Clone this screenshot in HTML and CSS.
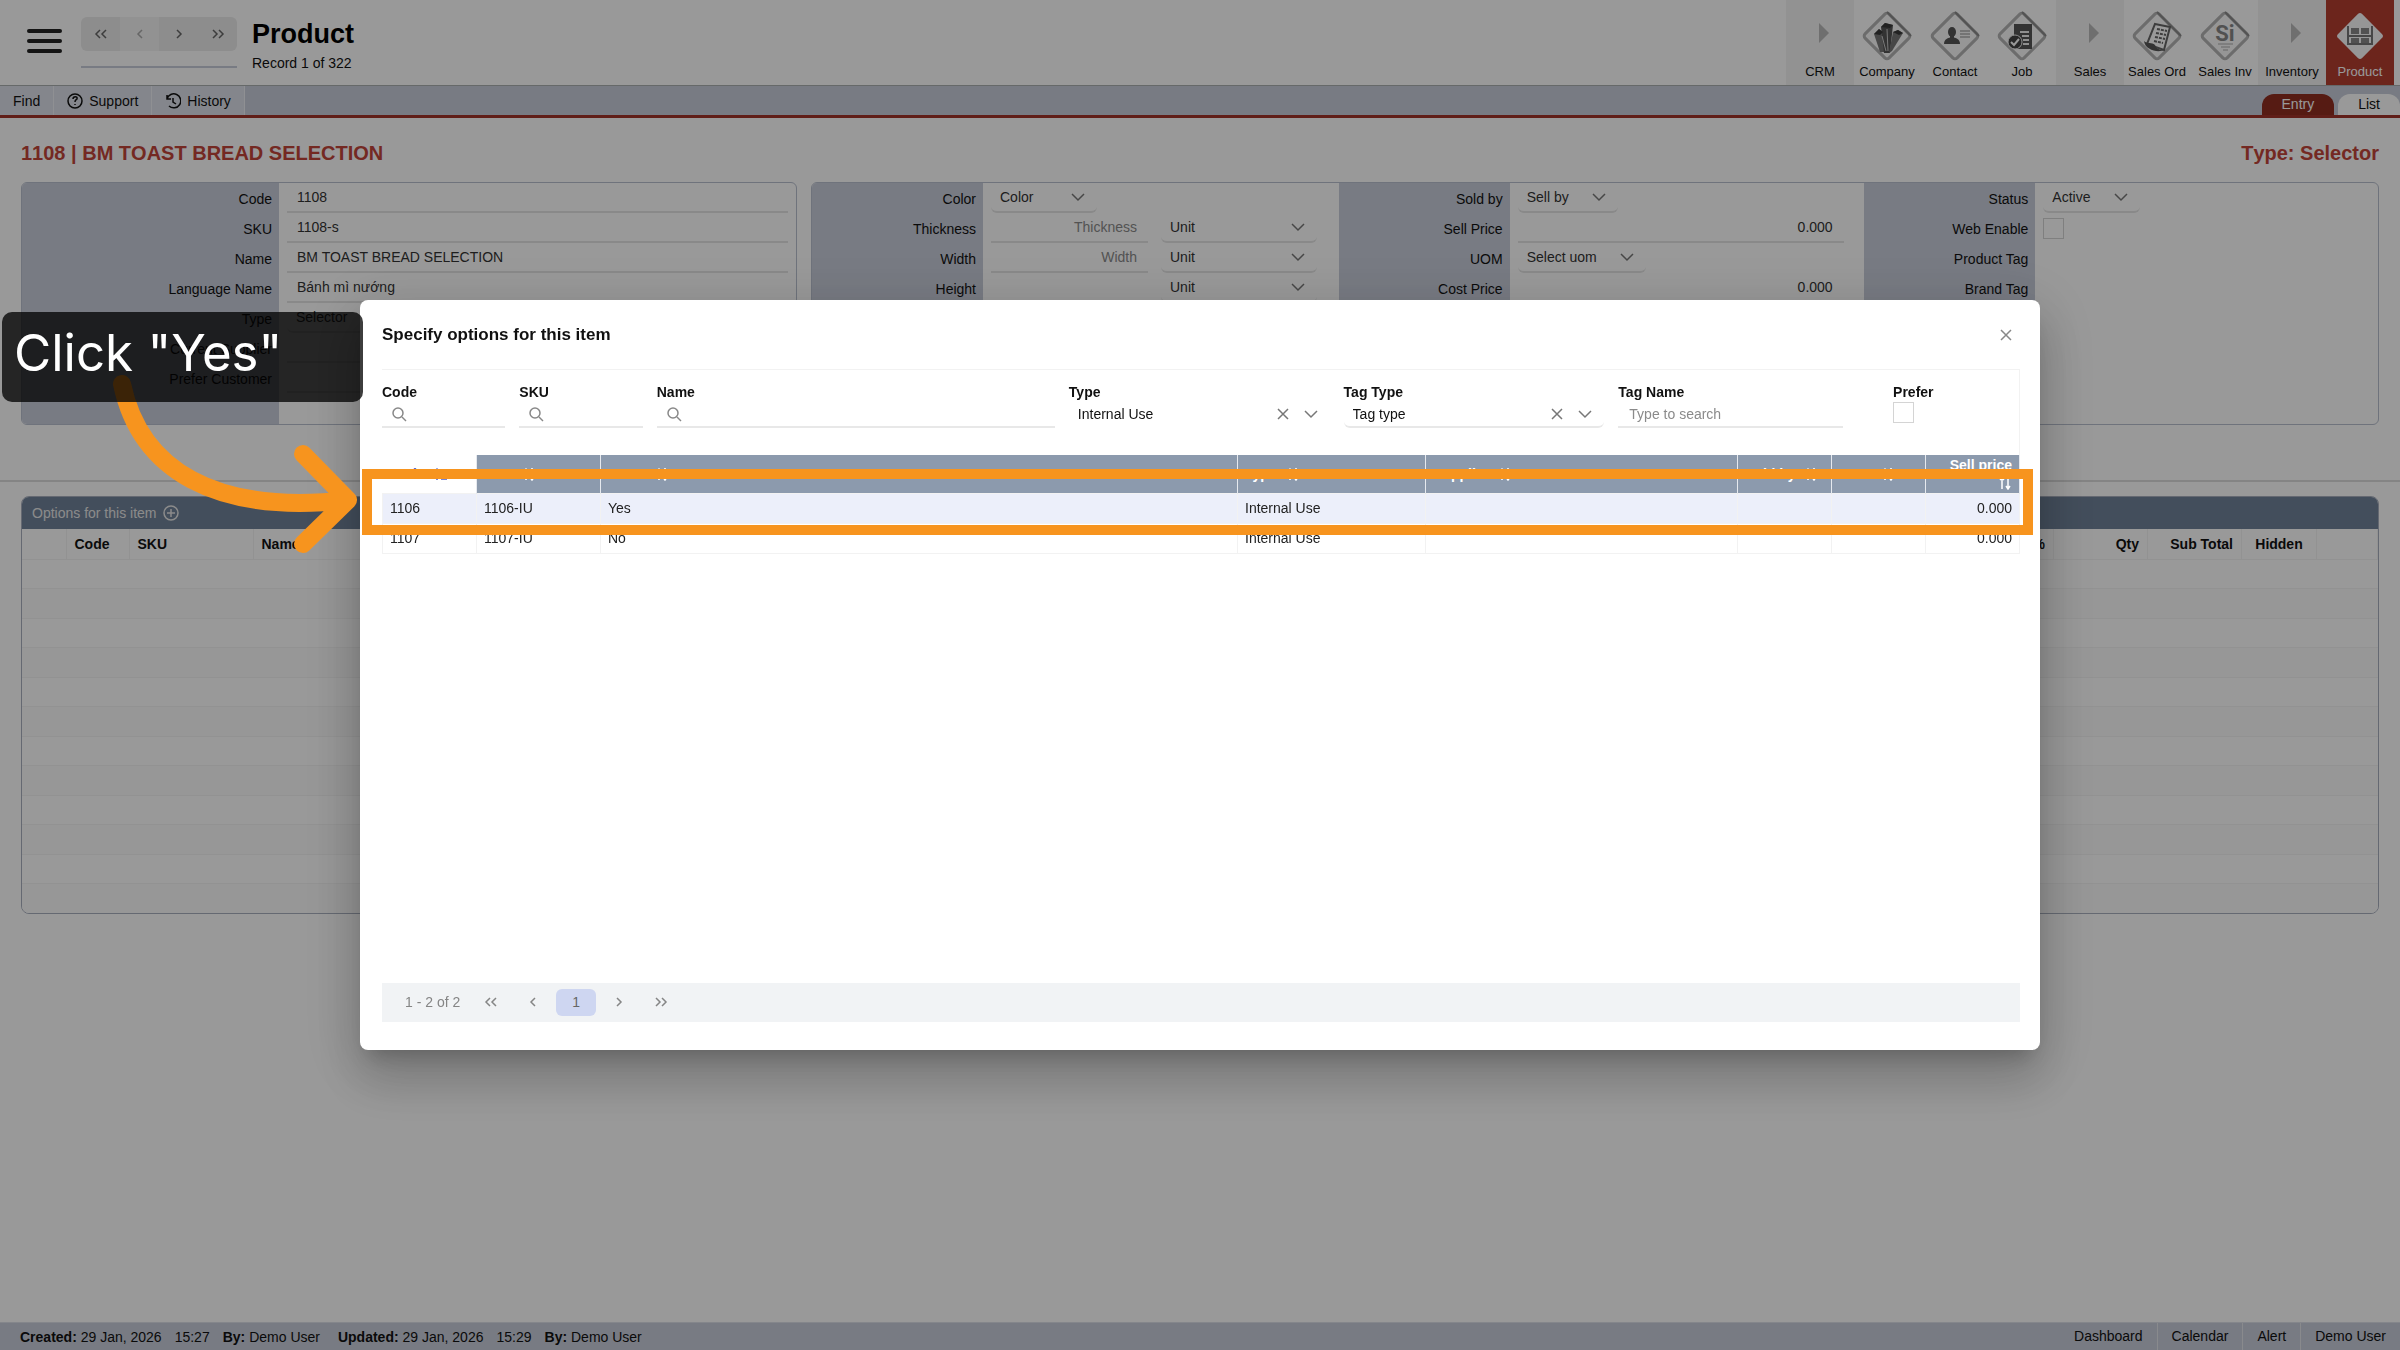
FILE: index.html
```html
<!DOCTYPE html>
<html lang="en">
<head>
  <meta charset="UTF-8">
  <title>Product</title>
  <link rel="stylesheet" href="styles.css">
</head>
<body>
  <!-- shared icons -->
  <svg class="sprite" aria-hidden="true">
    <symbol id="chevron" viewBox="0 0 14 14"><path d="M1 4l6 6 6-6"/></symbol>
    <symbol id="left" viewBox="0 0 14 14"><path d="M9 3L5 7l4 4"/></symbol>
    <symbol id="right" viewBox="0 0 14 14"><path d="M5 3l4 4-4 4"/></symbol>
    <symbol id="first" viewBox="0 0 14 14"><path d="M6 3L2 7l4 4M12 3L8 7l4 4"/></symbol>
    <symbol id="last" viewBox="0 0 14 14"><path d="M2 3l4 4-4 4M8 3l4 4-4 4"/></symbol>
    <symbol id="close" viewBox="0 0 14 14"><path d="M2 2l10 10M12 2L2 12"/></symbol>
    <symbol id="search" viewBox="0 0 16 16"><circle cx="7" cy="7" r="5"/><path d="M11 11l4 4"/></symbol>
    <symbol id="sort" viewBox="0 0 14 14"><path d="M4 13V2M2 4l2-2 2 2M10 1v12M8 10l2 3 2-3"/></symbol>
    <symbol id="sort-up" viewBox="0 0 14 14"><path d="M4 13V2M2 4l2-2 2 2M8 12h6M8 9h4"/></symbol>
    <symbol id="diamond" viewBox="0 0 54 54">
      <rect x="10" y="10" width="34" height="34" rx="3" transform="rotate(45 27 27)" fill="#fafafa" stroke="#b4b4b4" stroke-width="3"/>
      <path d="M27 3l24 24" stroke="#8a8a8a" stroke-width="2" fill="none"/>
    </symbol>
  </svg>

  <div class="app">
    <header class="header">
      <button class="burger" aria-label="Menu"><span></span><span></span><span></span></button>
      <div class="record-nav">
        <div class="nav-buttons">
          <button aria-label="First"><svg class="icon"><use href="#first"/></svg></button>
          <button class="off" aria-label="Previous"><svg class="icon"><use href="#left"/></svg></button>
          <button aria-label="Next"><svg class="icon"><use href="#right"/></svg></button>
          <button aria-label="Last"><svg class="icon"><use href="#last"/></svg></button>
        </div>
      </div>
      <div class="heading">
        <h1>Product</h1>
        <p>Record 1 of 322</p>
      </div>
      <nav class="modules">
        <a href="#" class="group"><svg viewBox="0 0 54 54"><path d="M26 14v20l10-10z" fill="#b9b9b9"/></svg>CRM</a>
        <a href="#"><svg viewBox="0 0 54 54"><use href="#diamond"/>
          <path d="M20 43L14 25l5-5 5 4 2 19z" fill="#777"/><path d="M24 44l-3-26 4-4 8 2-3 28z" fill="#555"/><path d="M29 44l4-21 5-2 5 3-11 18z" fill="#777"/><path d="M21 18l4-4 8 2-3 3zM14 25l5-5 4 3-3 3zM33 23l5-2 5 3-4 2z" fill="#3a3a3a"/><path d="M27 20l1 22M22 27l4 15" stroke="#ccc" fill="none"/></svg>Company</a>
        <a href="#"><svg viewBox="0 0 54 54"><use href="#diamond"/>
          <ellipse cx="24" cy="23" rx="4" ry="5" fill="#555"/><path d="M16 35c0-5 4-6 8-7 4 1 8 2 8 7z" fill="#555"/><path d="M22 26h4v4h-4z" fill="#555"/><path d="M32 22h10M32 25h10M32 28h10" stroke="#888"/></svg>Contact</a>
        <a href="#"><svg viewBox="0 0 54 54"><use href="#diamond"/>
          <path d="M19 15h18v25H19z" fill="#555"/><path d="M25 23h9M27 27h7M28 31h6M28 35h6" stroke="#eee" stroke-width="2"/><circle cx="20" cy="33" r="7" fill="#444" stroke="#eee"/><path d="M16 33l3 3 5-6" stroke="#fff" stroke-width="2" fill="none"/></svg>Job</a>
        <a href="#" class="group"><svg viewBox="0 0 54 54"><path d="M26 14v20l10-10z" fill="#b9b9b9"/></svg>Sales</a>
        <a href="#"><svg viewBox="0 0 54 54"><use href="#diamond"/>
          <path d="M25 15l15 3-6 23-17-6z" fill="#fff" stroke="#666" stroke-width="2"/><path d="M14 32c3 3 8 1 11 4 1 4 5 5 9 5-6 3-19 0-20-9z" fill="#555"/><path d="M27 20l10 2M26 24l10 2M25 28l10 2M24 32l9 2" stroke="#666" stroke-width="2" stroke-dasharray="3 1"/></svg>Sales Ord</a>
        <a href="#"><svg viewBox="0 0 54 54"><use href="#diamond"/>
          <text x="27" y="32" class="si">Si</text><path d="M20 35h15M23 38h9M25 41h5" stroke="#aaa"/></svg>Sales Inv</a>
        <a href="#" class="group"><svg viewBox="0 0 54 54"><path d="M26 14v20l10-10z" fill="#b9b9b9"/></svg>Inventory</a>
        <a href="#" class="active"><svg viewBox="0 0 54 54">
          <rect x="10" y="10" width="34" height="34" rx="3" transform="rotate(45 27 27)" fill="#fafafa"/>
          <path d="M15 17v19M39 17v19M14 27h26M14 35h26" fill="none" stroke="#777" stroke-width="2"/><path d="M18 19h8v6h-8zM28 19h8v6h-8zM18 29h8v5h-8zM28 29h8v5h-8z" fill="#888"/></svg>Product</a>
      </nav>
    </header>

    <div class="toolbar">
      <button>Find</button>
      <button><svg class="icon" viewBox="0 0 16 16"><circle cx="8" cy="8" r="7"/><path d="M6 6c0-3 5-3 4 0-1 1-2 1-2 3M8 11v1"/></svg>Support</button>
      <button><svg class="icon" viewBox="0 0 16 16"><path d="M2 2v4h4M2 6a7 7 0 1 1 2 7M8 5v4l3 2"/></svg>History</button>
      <div class="tabs">
        <a href="#" class="active">Entry</a>
        <a href="#">List</a>
      </div>
    </div>

    <main>
      <div class="title-row">
        <h2>1108 | BM TOAST BREAD SELECTION</h2>
        <h2>Type: Selector</h2>
      </div>

      <div class="panels">
        <section class="panel">
          <div class="form main-form">
            <label for="code">Code</label><div class="field"><input id="code" value="1108"></div>
            <label for="sku">SKU</label><div class="field"><input id="sku" value="1108-s"></div>
            <label for="name">Name</label><div class="field"><input id="name" value="BM TOAST BREAD SELECTION"></div>
            <label for="lang">Language Name</label><div class="field"><input id="lang" value="Bánh mì nướng"></div>
            <label for="type">Type</label><div class="field"><span class="select"><select id="type"><option>Selector</option></select></span></div>
            <label for="supplier">Current Supplier</label><div class="field"><input id="supplier"></div>
            <label for="customer">Prefer Customer</label><div class="field"><input id="customer"></div>
          </div>
        </section>

        <section class="panel panel-wide">
          <div class="form">
            <label for="color">Color</label><div class="field"><span class="select w-color"><select id="color"><option>Color</option></select><svg class="icon"><use href="#chevron"/></svg></span></div>
            <label for="thick">Thickness</label><div class="field"><input id="thick" class="num" placeholder="Thickness"><span class="select w-unit"><select aria-label="Thickness unit"><option>Unit</option></select><svg class="icon"><use href="#chevron"/></svg></span></div>
            <label for="width">Width</label><div class="field"><input id="width" class="num" placeholder="Width"><span class="select w-unit"><select aria-label="Width unit"><option>Unit</option></select><svg class="icon"><use href="#chevron"/></svg></span></div>
            <label for="height">Height</label><div class="field"><input id="height" class="num"><span class="select w-unit"><select aria-label="Height unit"><option>Unit</option></select><svg class="icon"><use href="#chevron"/></svg></span></div>
          </div>
          <div class="form">
            <label for="soldby">Sold by</label><div class="field"><span class="select w-sell"><select id="soldby"><option>Sell by</option></select><svg class="icon"><use href="#chevron"/></svg></span></div>
            <label for="price">Sell Price</label><div class="field"><input id="price" class="money" value="0.000"></div>
            <label for="uom">UOM</label><div class="field"><span class="select w-uom"><select id="uom"><option>Select uom</option></select><svg class="icon"><use href="#chevron"/></svg></span></div>
            <label for="cost">Cost Price</label><div class="field"><input id="cost" class="money" value="0.000"></div>
          </div>
          <div class="form">
            <label for="status">Status</label><div class="field"><span class="select w-status"><select id="status"><option>Active</option></select><svg class="icon"><use href="#chevron"/></svg></span></div>
            <label for="web">Web Enable</label><div class="field"><input id="web" type="checkbox"></div>
            <span class="label">Product Tag</span><div class="field"></div>
            <span class="label">Brand Tag</span><div class="field"></div>
          </div>
        </section>
      </div>

      <hr>

      <section class="options">
        <h3>Options for this item <svg class="icon" viewBox="0 0 16 16"><circle cx="8" cy="8" r="7"/><path d="M8 4v8M4 8h8"/></svg></h3>
        <table>
          <colgroup><col class="c-act"><col class="c-code"><col class="c-sku"><col><col class="c-num"><col class="c-num"><col class="c-num"><col class="c-hidden"><col class="c-end"></colgroup>
          <thead>
            <tr><th></th><th>Code</th><th>SKU</th><th>Name</th><th class="right">Disc %</th><th class="right">Qty</th><th class="right">Sub Total</th><th class="center">Hidden</th><th></th></tr>
          </thead>
          <tbody>
            <tr><td colspan="9"></td></tr>
            <tr><td colspan="9"></td></tr>
            <tr><td colspan="9"></td></tr>
            <tr><td colspan="9"></td></tr>
            <tr><td colspan="9"></td></tr>
            <tr><td colspan="9"></td></tr>
            <tr><td colspan="9"></td></tr>
            <tr><td colspan="9"></td></tr>
            <tr><td colspan="9"></td></tr>
            <tr><td colspan="9"></td></tr>
            <tr><td colspan="9"></td></tr>
            <tr><td colspan="9"></td></tr>
          </tbody>
        </table>
      </section>
    </main>

    <footer class="footer">
      <p><b>Created:</b> 29 Jan, 2026</p><p>15:27</p><p class="by"><b>By:</b> Demo User</p>
      <p><b>Updated:</b> 29 Jan, 2026</p><p>15:29</p><p><b>By:</b> Demo User</p>
      <nav>
        <a href="#">Dashboard</a><a href="#">Calendar</a><a href="#">Alert</a><a href="#">Demo User</a>
      </nav>
    </footer>
  </div>

  <div class="mask">
    <div class="dialog" role="dialog" aria-labelledby="dialog-title">
      <div class="dialog-header">
        <h3 id="dialog-title">Specify options for this item</h3>
        <button aria-label="Close"><svg class="icon"><use href="#close"/></svg></button>
      </div>

      <div class="filters">
        <div class="filter">
          <label for="f-code">Code</label>
          <div class="control"><svg class="icon search"><use href="#search"/></svg><input id="f-code"></div>
        </div>
        <div class="filter">
          <label for="f-sku">SKU</label>
          <div class="control"><svg class="icon search"><use href="#search"/></svg><input id="f-sku"></div>
        </div>
        <div class="filter span3">
          <label for="f-name">Name</label>
          <div class="control"><svg class="icon search"><use href="#search"/></svg><input id="f-name"></div>
        </div>
        <div class="filter span2">
          <label for="f-type">Type</label>
          <div class="control plain"><select id="f-type"><option>Internal Use</option></select><svg class="icon"><use href="#close"/></svg><svg class="icon"><use href="#chevron"/></svg></div>
        </div>
        <div class="filter span2">
          <label for="f-tagtype">Tag Type</label>
          <div class="control rounded"><select id="f-tagtype"><option>Tag type</option></select><svg class="icon"><use href="#close"/></svg><svg class="icon"><use href="#chevron"/></svg></div>
        </div>
        <div class="filter span2 tag-name">
          <label for="f-tag">Tag Name</label>
          <div class="control"><input id="f-tag" placeholder="Type to search"></div>
        </div>
        <div class="filter">
          <label for="f-prefer">Prefer</label>
          <input id="f-prefer" type="checkbox">
        </div>
      </div>

      <div class="results">
        <table>
          <colgroup><col class="r-code"><col class="r-sku"><col><col class="r-type"><col class="r-supplier"><col class="r-code"><col class="r-code"><col class="r-code"></colgroup>
          <thead>
            <tr>
              <th class="sorted">Code <svg class="icon"><use href="#sort-up"/></svg></th>
              <th>SKU <svg class="icon"><use href="#sort"/></svg></th>
              <th>Name <svg class="icon"><use href="#sort"/></svg></th>
              <th>Type <svg class="icon"><use href="#sort"/></svg></th>
              <th>Supplier <svg class="icon"><use href="#sort"/></svg></th>
              <th>Sold by <svg class="icon"><use href="#sort"/></svg></th>
              <th>UOM <svg class="icon"><use href="#sort"/></svg></th>
              <th class="right">Sell price <svg class="icon"><use href="#sort"/></svg></th>
            </tr>
          </thead>
          <tbody>
            <tr class="selected"><td>1106</td><td>1106-IU</td><td>Yes</td><td>Internal Use</td><td></td><td></td><td></td><td class="right">0.000</td></tr>
            <tr><td>1107</td><td>1107-IU</td><td>No</td><td>Internal Use</td><td></td><td></td><td></td><td class="right">0.000</td></tr>
          </tbody>
        </table>
        <div class="highlight"></div>
      </div>

      <div class="paginator">
        <span>1 - 2 of 2</span>
        <button aria-label="First page"><svg class="icon"><use href="#first"/></svg></button>
        <button aria-label="Previous page"><svg class="icon"><use href="#left"/></svg></button>
        <button class="page">1</button>
        <button aria-label="Next page"><svg class="icon"><use href="#right"/></svg></button>
        <button aria-label="Last page"><svg class="icon"><use href="#last"/></svg></button>
      </div>
    </div>

    <!-- guide step -->
    <svg class="arrow" viewBox="0 0 260 190"><path d="M22 14C40 100 115 145 248 130M203 84l45 46-45 44"/></svg>
    <div class="callout">Click "Yes"</div>
  </div>
</body>
</html>
```

FILE: styles.css
```css
* {
  box-sizing: border-box;
  margin: 0;
  padding: 0;
}

body {
  font-family: "Liberation Sans", Arial, sans-serif;
  font-size: 14px;
  line-height: 18px;
  color: #111;
  background: #fff;
}

button, input, select {
  font: inherit;
  color: inherit;
  background: none;
  border: none;
  outline: none;
}

a {
  color: inherit;
  text-decoration: none;
}

table {
  width: 100%;
  table-layout: fixed;
  border-collapse: collapse;
}

.sprite {
  display: none;
}

.icon {
  width: 14px;
  height: 14px;
  fill: none;
  stroke: currentColor;
  stroke-width: 1.5;
  flex: none;
}

.right {
  text-align: right;
}

.center {
  text-align: center;
}

.app {
  min-height: 100vh;
  display: flex;
  flex-direction: column;
}

/* header */
.header {
  height: 86px;
  display: flex;
  padding: 0 7px 0 27px;
  border-bottom: 1px solid #aab0b0;
}

.burger {
  width: 35px;
  height: 24px;
  margin-top: 29px;
  display: flex;
  flex-direction: column;
  justify-content: space-between;
}

.burger span {
  width: 100%;
  height: 4px;
  border-radius: 2px;
  background: #222;
}

.record-nav {
  width: 156px;
  height: 51px;
  margin: 17px 15px 0 19px;
  border-bottom: 2px solid #c8cdda;
}

.nav-buttons {
  height: 34px;
  display: flex;
  border-radius: 6px;
  overflow: hidden;
  background: #ebebeb;
  color: #666;
}

.nav-buttons button {
  flex: 1;
}

.nav-buttons .icon {
  vertical-align: -2px;
}

.nav-buttons .off {
  background: #f3f3f3;
  color: #aaa;
}

.heading {
  padding-top: 18px;
}

.heading h1 {
  font-size: 27px;
  line-height: 32px;
  color: #000;
}

.heading p {
  margin-top: 4px;
}

.modules {
  display: flex;
  margin-left: auto;
}

.modules a {
  width: 68px;
  margin-right: -1px;
  padding-top: 9px;
  display: flex;
  flex-direction: column;
  align-items: center;
  font-size: 13px;
}

.modules a:nth-child(even) {
  margin-right: 0;
}

.modules svg {
  width: 54px;
  height: 54px;
}

.modules .group {
  background: #f3f3f3;
}

.modules .active {
  background: #b43e30;
  color: #fff;
}

.si {
  font: bold 22px Roboto, sans-serif;
  text-anchor: middle;
  fill: #888;
}

/* toolbar */
.toolbar {
  height: 32px;
  display: flex;
  background: #c8cdda;
  border-bottom: 3px solid #a03328;
}

.toolbar button {
  display: flex;
  align-items: center;
  padding: 0 13px;
  background: #dce0e9;
  border-right: 1px solid #eef0f5;
}

.toolbar .icon {
  width: 16px;
  height: 16px;
  margin-right: 6px;
}

.tabs {
  margin-left: auto;
  display: flex;
  gap: 4px;
  align-items: flex-end;
}

.tabs a {
  height: 21px;
  line-height: 20px;
  padding: 0 20px;
  border-radius: 12px 12px 0 0;
  background: #fff;
}

.tabs .active {
  background: #8f2d21;
  color: #fff;
}

/* record form */
main {
  flex: 1;
  padding: 0 21px;
}

.title-row {
  height: 64px;
  display: flex;
  align-items: center;
  justify-content: space-between;
  padding-top: 6px;
}

.title-row h2 {
  font-size: 20px;
  font-kerning: none;
  color: #c2453a;
}

.panels {
  display: grid;
  grid-template-columns: 776fr 1568fr;
  gap: 14px;
}

.panel {
  height: 243px;
  border: 1px solid #b9c0cf;
  border-radius: 6px;
  overflow: hidden;
}

.panel-wide {
  display: grid;
  grid-template-columns: 527fr 526fr 514fr;
}

.form {
  display: grid;
  grid-template-columns: 171px 1fr;
  grid-auto-rows: 30px;
  height: 241px;
  background: linear-gradient(#c8cdda, #c8cdda) no-repeat 0 0 / 171px 100%;
}

.main-form {
  grid-template-columns: 257px 1fr;
  background-size: 257px 100%;
}

.form label, .form .label {
  padding: 7px 7px 0 0;
  text-align: right;
}

.field {
  display: flex;
  gap: 13px;
  padding: 0 8px;
  color: #333;
}

.field input:not([type=checkbox]) {
  width: 100%;
  height: 30px;
  padding: 0 11px 0 10px;
  border-bottom: 2px solid #e4e4e4;
}

.field .num {
  flex: 0 0 157px;
  text-align: right;
}

.field .money {
  flex: 0 0 326px;
  text-align: right;
}

::placeholder {
  color: #8a8a8a;
}

.select {
  height: 30px;
  display: flex;
  align-items: center;
  padding-right: 12px;
  border-bottom: 2px solid #e4e4e4;
  border-radius: 6px;
}

.main-form .select {
  width: 100%;
}

select {
  flex: 1;
  min-width: 0;
  padding-left: 9px;
  appearance: none;
}

.select .icon, .control .icon {
  color: #777;
}

.w-color { width: 106px; }
.w-unit { width: 156px; }
.w-sell { width: 100px; }
.w-uom { width: 128px; }
.w-status { width: 97px; }

input[type=checkbox] {
  appearance: none;
  width: 21px;
  height: 21px;
  border: 1px solid #d4d4d4;
  background: #fff;
}

.field input[type=checkbox] {
  margin-top: 5px;
}

hr {
  margin: 55px -21px 14px;
  border: none;
  border-top: 2px solid #dcdcdc;
}

/* options list */
.options {
  border: 1px solid #a9b0bf;
  border-radius: 8px;
  overflow: hidden;
}

.options h3 {
  height: 32px;
  display: flex;
  align-items: center;
  gap: 6px;
  padding-left: 10px;
  font-size: 14px;
  font-weight: normal;
  color: #e8e8e8;
  background: #708299;
}

.options .icon {
  width: 16px;
  height: 16px;
}

.options table {
  height: 384px;
}

.options th {
  height: 30px;
  padding: 0 8px;
  text-align: left;
  border-right: 1px solid #f4f4f4;
}

.options td {
  height: 29px;
}

.options th.right {
  text-align: right;
}

.options th.center {
  text-align: center;
}

.options tbody tr {
  border-top: 1px solid #f4f4f4;
}

.options tbody tr:nth-child(even) {
  background: #fcfcfc;
}

.c-act { width: 44px; }
.c-code { width: 63px; }
.c-sku { width: 124px; }
.c-num { width: 94px; }
.c-hidden { width: 75px; }
.c-end { width: 61px; }

/* footer */
.footer {
  height: 28px;
  display: flex;
  align-items: center;
  gap: 13px;
  padding-left: 20px;
  background: #c8cdda;
  border-top: 1px solid #dde0e8;
}

.footer .by {
  margin-right: 5px;
}

.footer nav {
  display: flex;
  margin-left: auto;
}

.footer nav a {
  height: 27px;
  line-height: 26px;
  padding: 0 14px;
  border-left: 1px solid #e4e6ec;
}

.footer nav a:first-child {
  border: none;
}

/* dialog */
.mask {
  position: fixed;
  inset: 0;
  display: flex;
  align-items: center;
  justify-content: center;
  background: rgba(0, 0, 0, 0.4);
}

.dialog {
  width: 70%;
  min-height: 750px;
  display: flex;
  flex-direction: column;
  padding: 0 20px 28px 22px;
  border-radius: 8px;
  background: #fff;
  box-shadow: 0 14px 19px -9px rgba(0, 0, 0, 0.2), 0 30px 48px 4px rgba(0, 0, 0, 0.14), 0 11px 58px 10px rgba(0, 0, 0, 0.12);
}

.dialog-header {
  height: 69px;
  display: flex;
  align-items: center;
  justify-content: space-between;
  padding-right: 7px;
}

.dialog-header h3 {
  font-size: 17px;
}

.dialog-header button {
  height: 14px;
  color: #888;
}

.filters {
  display: grid;
  grid-template-columns: repeat(11, 12fr) 11fr;
  height: 86px;
  padding-top: 13px;
  border: 1px solid #f2f2f2;
  border-width: 1px 1px 0 0;
}

.filter {
  min-width: 0;
  padding-right: 14px;
}

.span2 { grid-column: span 2; }
.span3 { grid-column: span 3; }

.filter label {
  display: block;
  font-weight: bold;
}

.control {
  height: 27px;
  display: flex;
  align-items: center;
  gap: 14px;
  border-bottom: 2px solid #e8e8e8;
}

.control input {
  width: 100%;
  min-width: 0;
  padding-left: 11px;
}

.control .search {
  width: 16px;
  height: 16px;
  margin: 0 -10px 0 9px;
  color: #888;
}

.plain, .rounded {
  padding-right: 12px;
}

.plain {
  border-color: transparent;
}

.rounded {
  border-radius: 6px;
}

.tag-name {
  padding-right: 50px;
}

.filter input[type=checkbox] {
  display: block;
  margin-top: 1px;
}

.results {
  position: relative;
  color: #222;
}

.results th {
  height: 38px;
  padding: 0 7px;
  text-align: left;
  line-height: 18px;
  color: #fff;
  background: #8c9aad;
  border-right: 1px solid #e6e9ee;
}

.results th.right {
  text-align: right;
}

.results th .icon {
  margin-left: 5px;
  vertical-align: -2px;
}

.results .sorted {
  color: #4a5fd0;
  background: #fff;
}

.results td {
  height: 30px;
  padding: 0 7px;
  border: 1px solid #f2f2f2;
}

.selected {
  background: #eceffa;
}

.r-code { width: 94px; }
.r-sku { width: 124px; }
.r-type { width: 188px; }
.r-supplier { width: 312px; }

.highlight {
  position: absolute;
  top: 14px;
  left: -20px;
  right: -13px;
  height: 66px;
  border: 10px solid #f7941e;
}

.paginator {
  height: 39px;
  margin-top: auto;
  display: flex;
  align-items: center;
  padding: 0 0 1px 23px;
  color: #858585;
  background: #f1f3f5;
}

.paginator span {
  margin-right: 10px;
}

.paginator button {
  width: 42px;
  height: 27px;
}

.paginator .icon {
  vertical-align: -2px;
}

.paginator .page {
  width: 40px;
  margin: 0 2px;
  border-radius: 6px;
  color: #666;
  background: #ced6f1;
}

/* guide step */
.arrow {
  position: absolute;
  top: 370px;
  left: 100px;
  width: 260px;
  height: 190px;
  fill: none;
  stroke: #f7941e;
  stroke-width: 18;
  stroke-linecap: round;
  stroke-linejoin: round;
}

.callout {
  position: absolute;
  top: 312px;
  left: 2px;
  width: 361px;
  height: 90px;
  padding-left: 12px;
  border-radius: 10px;
  font-family: Inter, sans-serif;
  font-size: 51px;
  line-height: 82px;
  color: #fff;
  background: rgba(0, 0, 0, 0.76);
}
```
